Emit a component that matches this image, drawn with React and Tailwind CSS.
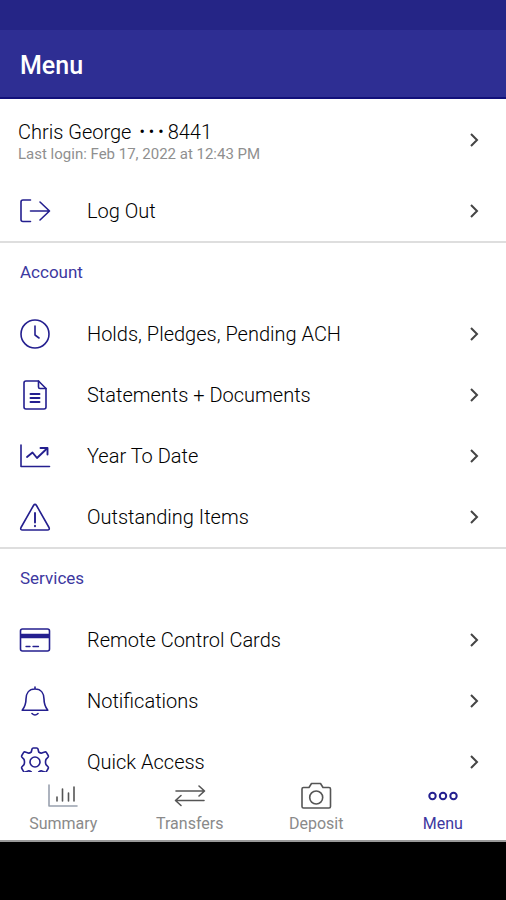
const sections = [
  {
    title: 'Account',
    items: [
      { label: 'Holds, Pledges, Pending ACH', icon: ClockIcon },
      { label: 'Statements + Documents', icon: DocumentIcon },
      { label: 'Year To Date', icon: TrendIcon },
      { label: 'Outstanding Items', icon: WarningIcon },
    ],
  },
  {
    title: 'Services',
    items: [
      { label: 'Remote Control Cards', icon: CardIcon },
      { label: 'Notifications', icon: BellIcon },
      { label: 'Quick Access', icon: GearIcon },
    ],
  },
]

const tabs = [
  { label: 'Summary', icon: SummaryIcon },
  { label: 'Transfers', icon: TransfersIcon },
  { label: 'Deposit', icon: CameraIcon },
  { label: 'Menu', icon: MoreIcon, active: true },
]

function Icon({ children }) {
  return (
    <svg
      aria-hidden="true"
      className="size-8 shrink-0"
      fill="none"
      stroke="currentColor"
      strokeLinecap="round"
      strokeLinejoin="round"
      strokeWidth="1.6"
      viewBox="0 0 32 32"
    >
      {children}
    </svg>
  )
}

function LogoutIcon() {
  return (
    <Icon>
      <path d="M11.500 5H4Q2 5 2 7V24.500Q2 26.500 4 26.500H11.500" />
      <path d="M11.500 16H30M21 7 30.500 16 21 25" />
    </Icon>
  )
}

function ClockIcon() {
  return (
    <Icon>
      <circle cx="16" cy="16" r="14" />
      <path d="M16 8V17L20 20" />
    </Icon>
  )
}

function DocumentIcon() {
  return (
    <Icon>
      <path d="M19.500 2H7Q5 2 5 4V28Q5 30 7 30H25Q27 30 27 28V9.500Z" />
      <path d="M19.500 2V8Q19.500 9.500 21 9.500H27" />
      <path d="M11.500 15H20.500M11.500 19H20.500M11.500 23H20.500" strokeWidth="1.900" />
    </Icon>
  )
}

function TrendIcon() {
  return (
    <Icon>
      <path d="M2 5V26.500H30.500" />
      <path d="M8 17 13.500 12.500 18 18 28 8.500" strokeWidth="1.900" />
      <path d="M21.500 8H28.500V14.500" strokeWidth="1.900" />
    </Icon>
  )
}

function WarningIcon() {
  return (
    <Icon>
      <path d="M14.500 4.500Q16 2.300 17.500 4.500L30 26.500Q31 29 28.500 29H3.500Q1 29 2 26.500Z" />
      <path d="M16 12V21.500M16 24.800V25.200" strokeWidth="1.900" />
    </Icon>
  )
}

function CardIcon() {
  return (
    <Icon>
      <rect height="22" rx="2" width="29" x="1.500" y="5" />
      <path d="M2 12H30" strokeLinecap="butt" strokeWidth="4.500" />
      <path d="M7 22.500H11M14 22.500H19.500" strokeWidth="1.300" />
    </Icon>
  )
}

function BellIcon() {
  return (
    <Icon>
      <path d="M16 2V4M16 4C9.500 4 7 9 7 14C7 20 5 23 3.200 25.200H28.800C27 23 25 20 25 14C25 9 22.500 4 16 4Z" />
      <path d="M13 28.500Q16 31.500 19 28.500" />
    </Icon>
  )
}

function GearIcon() {
  return (
    <Icon>
      <circle cx="16" cy="16" r="5" />
      <path d="M13 3Q13.300 2 14.300 2H17.700Q18.700 2 19 3L19.700 6Q22 7.700 23.500 6.800L25.800 6Q26.900 5.700 27.500 6.600L29.200 9.500Q29.700 10.500 29 11.300L27 13.400Q26 16 27 18.600L29 20.700Q29.700 21.500 29.200 22.500L27.500 25.400Q26.900 26.300 25.800 26L23.500 25.200Q22 24.300 19.700 26L19 29Q18.700 30 17.700 30H14.300Q13.300 30 13 29L12.300 26Q10 24.300 8.500 25.200L6.200 26Q5.100 26.300 4.500 25.400L2.800 22.500Q2.300 21.500 3 20.700L5 18.600Q6 16 5 13.400L3 11.300Q2.300 10.500 2.800 9.500L4.500 6.600Q5.100 5.700 6.200 6L8.500 6.800Q10 7.700 12.300 6Z" />
    </Icon>
  )
}

function SummaryIcon() {
  return (
    <Icon>
      <path className="text-gray-400" d="M2 5V26H30" stroke="currentColor" />
      <path d="M10 17V21M15.500 9V21M21.500 13V21M27 7V21" />
    </Icon>
  )
}

function TransfersIcon() {
  return (
    <Icon>
      <path d="M2 11H30M25 6 30.500 11 25 16" />
      <path d="M30 20.500H2M7 15.500 1.500 20.500 7 25.500" />
    </Icon>
  )
}

function CameraIcon() {
  return (
    <Icon>
      <path d="M3.500 7.500H9L11.500 3.500H20.500L23 7.500H29Q30.500 7.500 30.500 9V26.500Q30.500 28 29 28H3.500Q2 28 2 26.500V9Q2 7.500 3.500 7.500Z" />
      <circle cx="16.200" cy="17.500" r="6.500" />
    </Icon>
  )
}

function MoreIcon() {
  return (
    <Icon>
      <g strokeWidth="2">
        <circle cx="5.500" cy="16" r="3.200" />
        <circle cx="16" cy="16" r="3.200" />
        <circle cx="26.500" cy="16" r="3.200" />
      </g>
    </Icon>
  )
}

function Chevron() {
  return (
    <svg
      aria-hidden="true"
      className="size-4 shrink-0 text-[#444444]"
      fill="none"
      stroke="currentColor"
      strokeWidth="2"
      viewBox="0 0 16 16"
    >
      <path d="M5 2 11 8 5 14" />
    </svg>
  )
}

function MenuRow({ label, icon: RowIcon }) {
  return (
    <button className="flex h-[61px] w-full shrink-0 items-center pl-[19px] pr-6 text-left" type="button">
      <span className="text-[#241f8f]">
        <RowIcon />
      </span>
      <span className="ml-9 flex-1 text-xl leading-5">{label}</span>
      <Chevron />
    </button>
  )
}

function App() {
  return (
    <div className="flex h-screen flex-col bg-white font-[Roboto,sans-serif] font-light text-black">
      <div className="h-[30px] shrink-0 bg-[#252586]" />
      <header className="flex h-[69px] shrink-0 items-center border-b-2 border-[#12107a] bg-[#2e2e93] px-5 pt-1">
        <h1 className="text-[25px] font-medium text-white">Menu</h1>
      </header>

      <main className="min-h-0 flex-1 overflow-hidden">
        <section className="border-b-2 border-[#dedede]">
          <button className="flex h-[81px] w-full items-center pl-[18px] pr-6 text-left" type="button">
            <span className="flex-1 pt-1">
              <span className="flex items-center gap-2 text-xl leading-6">
                Chris George
                <span className="flex items-center gap-1">
                  <span className="flex gap-1 text-base font-normal">
                    <span>•</span>
                    <span>•</span>
                    <span>•</span>
                  </span>
                  8441
                </span>
              </span>
              <span className="block text-[15px] leading-5 font-normal text-[#8f8f8f]">
                Last login: Feb 17, 2022 at 12:43 PM
              </span>
            </span>
            <Chevron />
          </button>
          <MenuRow icon={LogoutIcon} label="Log Out" />
        </section>

        {sections.map((section) => (
          <section className="border-b-2 border-[#dedede]" key={section.title}>
            <h2 className="flex h-[60px] items-center px-5 text-[17px] font-normal text-[#3d38a0]">{section.title}</h2>
            {section.items.map((item) => (
              <MenuRow icon={item.icon} key={item.label} label={item.label} />
            ))}
          </section>
        ))}
      </main>

      <nav className="grid shrink-0 grid-cols-4 border-b-2 border-[#9a9a9a] bg-white pb-1 pt-2">
        {tabs.map(({ label, icon: TabIcon, active }) => (
          <a
            aria-current={active ? 'page' : undefined}
            className={`flex flex-col items-center font-normal ${active ? 'text-[#241f8f]' : 'text-[#555555]'}`}
            href="#"
            key={label}
          >
            <TabIcon />
            <span className={`text-base leading-6 ${active ? 'text-[#3d38a0]' : 'text-[#8a8a8a]'}`}>{label}</span>
          </a>
        ))}
      </nav>
      <div className="h-[58px] shrink-0 bg-black" />
    </div>
  )
}

export default App
